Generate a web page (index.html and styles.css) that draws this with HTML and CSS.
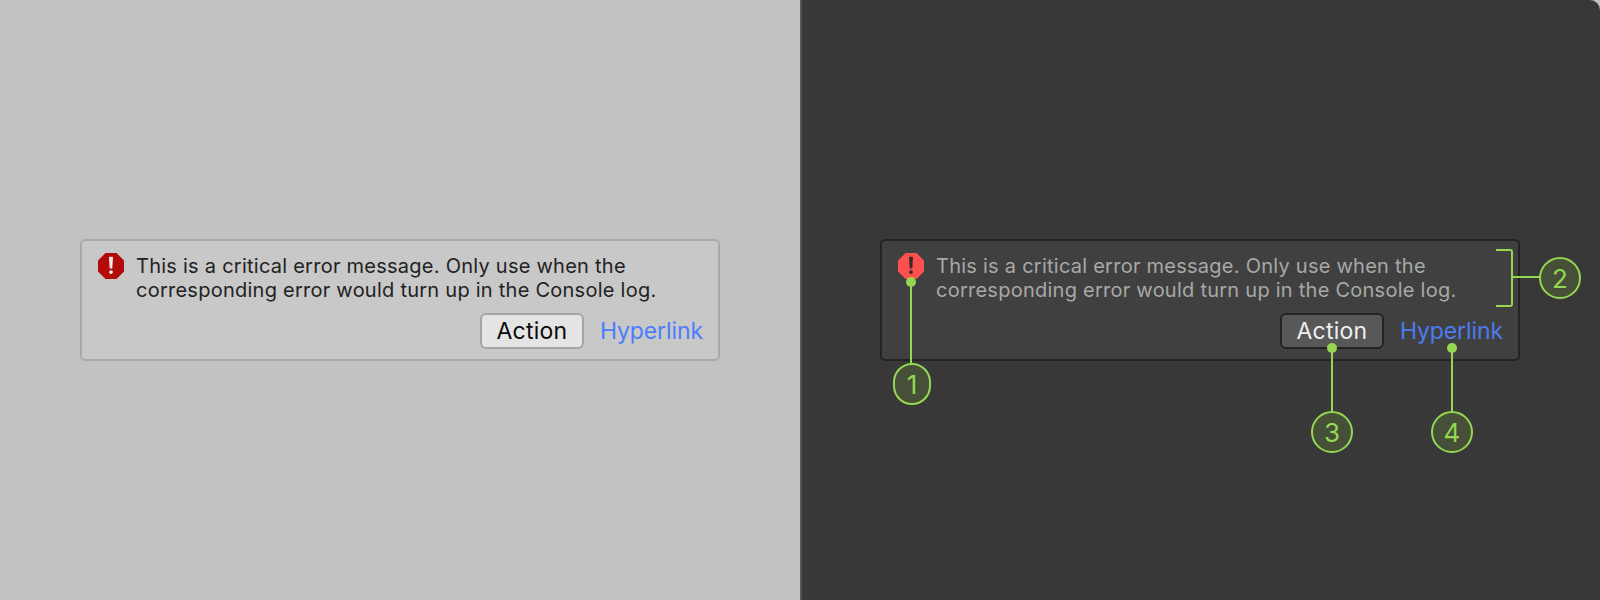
FILE: index.html
```html
<!DOCTYPE html>
<html>
<head>
  <title>Error help box</title>
  <link rel="stylesheet" href="styles.css">
</head>
<body>
  <div class="page">
    <div class="panel light">
      <div class="card">
        <div class="message">
          <svg class="icon" viewBox="0 0 26 26">
            <polygon class="icon-shape" points="7.5,0 18.5,0 26,7.5 26,18.5 18.5,26 7.5,26 0,18.5 0,7.5"/>
            <path class="icon-mark" d="M11 4.6q0-.8.8-.8h2.4q.8 0 .8.8l-.7 10.9h-2.6zM13 17.2a1.9 1.9 0 1 1 0 3.8a1.9 1.9 0 0 1 0-3.8z"/>
          </svg>
          <p class="text">This is a critical error message. Only use when the corresponding error would turn up in the Console log.</p>
        </div>
        <div class="actions">
          <button class="button">Action</button>
          <a class="link">Hyperlink</a>
        </div>
      </div>
    </div>

    <div class="panel dark">
      <div class="card">
        <div class="message">
          <svg class="icon" viewBox="0 0 26 26">
            <polygon class="icon-shape" points="7.5,0 18.5,0 26,7.5 26,18.5 18.5,26 7.5,26 0,18.5 0,7.5"/>
            <path class="icon-mark" d="M11 4.6q0-.8.8-.8h2.4q.8 0 .8.8l-.7 10.9h-2.6zM13 17.2a1.9 1.9 0 1 1 0 3.8a1.9 1.9 0 0 1 0-3.8z"/>
          </svg>
          <p class="text">This is a critical error message. Only use when the corresponding error would turn up in the Console log.</p>
        </div>
        <div class="actions">
          <button class="button">Action</button>
          <a class="link">Hyperlink</a>
        </div>
      </div>

      <div class="line line-1"></div>
      <div class="dot dot-1"></div>
      <div class="badge badge-1">1</div>

      <div class="bracket"></div>
      <div class="bracket-line"></div>
      <div class="badge badge-2">2</div>

      <div class="line line-3"></div>
      <div class="dot dot-3"></div>
      <div class="badge badge-3">3</div>

      <div class="line line-4"></div>
      <div class="dot dot-4"></div>
      <div class="badge badge-4">4</div>
    </div>
  </div>
</body>
</html>
```

FILE: styles.css
```css
body {
  margin: 0;
  background-color: #c2c2c2;
  font-family: Inter, "Liberation Sans", sans-serif;
}

.page {
  display: flex;
  width: 1600px;
  height: 600px;
  overflow: hidden;
}

.panel {
  position: relative;
  display: flex;
  align-items: center;
  justify-content: center;
  width: 800px;
  height: 600px;
}

.light {
  background-color: #c2c2c2;
}

.dark {
  background-color: #383838;
  border-top-right-radius: 10px;
  box-shadow: inset 2px 0 0 #555;
}

.card {
  box-sizing: border-box;
  width: 640px;
  height: 122px;
  padding: 12px 15px 12px 16px;
  border: 2px solid;
  border-radius: 5px;
}

.light .card {
  background-color: #c8c8c8;
  border-color: #a9a9a9;
}

.dark .card {
  background-color: #404040;
  border-color: #242424;
}

.message {
  display: flex;
  gap: 12px;
}

.icon {
  flex-shrink: 0;
  width: 26px;
  height: 26px;
}

.light .icon-shape {
  fill: #b30a0a;
}

.light .icon-mark {
  fill: #f4e8e8;
}

.dark .icon-shape {
  fill: #ff5050;
}

.dark .icon-mark {
  fill: #3a2a2a;
}

.text {
  margin: 1px 0 0;
  width: 540px;
  font-size: 20px;
  line-height: 24px;
  letter-spacing: 0.25px;
}

.light .text {
  color: #222;
}

.dark .text {
  color: #a8a8a8;
}

.actions {
  display: flex;
  align-items: center;
  justify-content: flex-end;
  gap: 16px;
  margin-top: 11px;
}

.button {
  box-sizing: border-box;
  width: 104px;
  height: 36px;
  padding: 0;
  border: 2px solid;
  border-radius: 6px;
  font-family: inherit;
  font-size: 23px;
  letter-spacing: 0.2px;
}

.light .button {
  background-color: #e4e4e4;
  border-color: #a4a4a4;
  color: #0a0a0a;
}

.dark .button {
  background-color: #585858;
  border-color: #242424;
  color: #eee;
}

.link {
  font-size: 23px;
  line-height: 36px;
  letter-spacing: -0.1px;
  color: #4c7dff;
}

.dark .link {
  color: #4a7cf0;
}

/* annotations on the dark panel */
.line,
.dot,
.badge,
.bracket,
.bracket-line {
  position: absolute;
}

.line {
  width: 2px;
  background-color: #94d852;
}

.dot {
  width: 10px;
  height: 10px;
  border-radius: 50%;
  background-color: #94d852;
}

.badge {
  box-sizing: border-box;
  display: flex;
  align-items: center;
  justify-content: center;
  width: 42px;
  height: 42px;
  border: 2px solid #94d852;
  border-radius: 21px;
  background-color: #465038;
  color: #94d852;
  font-size: 26px;
}

.line-1 {
  left: 110px;
  top: 282px;
  height: 82px;
}

.dot-1 {
  left: 106px;
  top: 277px;
}

.badge-1 {
  left: 93px;
  top: 363px;
  width: 38px;
}

.bracket {
  box-sizing: border-box;
  left: 696px;
  top: 249px;
  width: 17px;
  height: 58px;
  border: 2px solid #94d852;
  border-left: none;
  border-radius: 0 3px 3px 0;
}

.bracket-line {
  left: 713px;
  top: 276px;
  width: 27px;
  height: 2px;
  background-color: #94d852;
}

.badge-2 {
  left: 739px;
  top: 257px;
}

.line-3 {
  left: 531px;
  top: 348px;
  height: 64px;
}

.dot-3 {
  left: 527px;
  top: 343px;
}

.badge-3 {
  left: 511px;
  top: 411px;
}

.line-4 {
  left: 651px;
  top: 348px;
  height: 64px;
}

.dot-4 {
  left: 647px;
  top: 343px;
}

.badge-4 {
  left: 631px;
  top: 411px;
}
```
